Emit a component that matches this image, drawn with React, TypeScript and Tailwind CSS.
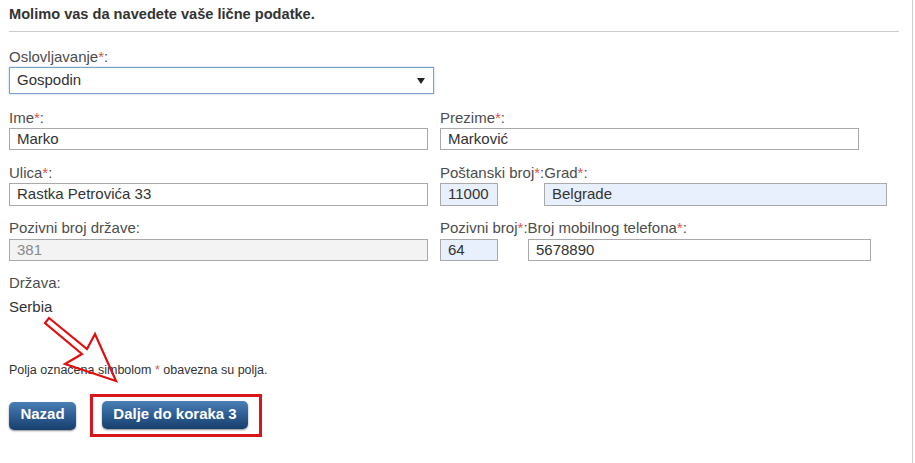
import type { ReactNode } from "react";

const Req = () => <span className="text-[#d9534f]">*</span>;

function Label({ children, className = "" }: { children: ReactNode; className?: string }) {
  return <div className={`text-[15px] leading-[18px] text-[#4d4d4d] ${className}`}>{children}</div>;
}

function Field({ value, className = "", tone = "white" }: { value: string; className?: string; tone?: "white" | "fill" | "off" }) {
  const look =
    tone === "fill" ? "bg-[#e8f0fe] text-[#333]" : tone === "off" ? "bg-[#f3f3f3] text-[#8a8a8a]" : "bg-white text-[#333]";
  return (
    <div className={`flex items-center border border-[#a9a9a9] pl-[7px] text-[15px] ${look} ${className}`}>
      {value}
    </div>
  );
}

function BlueButton({ children, className = "" }: { children: ReactNode; className?: string }) {
  return (
    <button
      className={`h-[28px] rounded-[5px] bg-gradient-to-b from-[#4b7fb5] via-[#2d5e93] to-[#173f6c] pb-[2px] text-[15px] font-bold text-white shadow-[0_1px_2px_rgba(0,0,0,0.45)] ${className}`}
    >
      {children}
    </button>
  );
}

export default function App() {
  return (
    <div className="relative min-h-[463px] w-[913px] border-r border-[#cfcfcf] bg-white pl-[9px] font-['Liberation_Sans',Arial,sans-serif]">
      <h1 className="pt-[6px] text-[14.6px] font-bold leading-[16px] text-[#333]">Molimo vas da navedete vaše lične podatke.</h1>
      <div className="mt-[9px] w-[890px] border-t border-[#cccccc]" />

      <Label className="mt-[16px]">
        Oslovljavanje<Req />:
      </Label>
      <div className="mt-[1px] flex h-[27px] w-[425px] items-center justify-between border border-[#7ea2cb] pl-[7px] pr-[8px] text-[15px] text-[#333] shadow-[0_0_2px_rgba(90,140,200,0.5)]">
        <span>Gospodin</span>
        <svg width="8" height="6" viewBox="0 0 8 6">
          <path d="M0 0h8L4 6z" fill="#222" />
        </svg>
      </div>

      {/* two-column rows */}
      <div className="grid grid-cols-[431px_1fr]">
        <div className="mt-[15px]">
          <Label>
            Ime<Req />:
          </Label>
          <Field value="Marko" className="mt-[1px] h-[22px] w-[419px]" />
        </div>
        <div className="mt-[15px]">
          <Label>
            Prezime<Req />:
          </Label>
          <Field value="Marković" className="mt-[1px] h-[22px] w-[419px]" />
        </div>

        <div className="mt-[14px]">
          <Label>
            Ulica<Req />:
          </Label>
          <Field value="Rastka Petrovića 33" className="mt-[1px] h-[23px] w-[419px]" />
        </div>
        <div className="mt-[14px]">
          <Label>
            Poštanski broj<Req />:Grad<Req />:
          </Label>
          <div className="mt-[1px] flex">
            <Field value="11000" tone="fill" className="h-[23px] w-[58px]" />
            <Field value="Belgrade" tone="fill" className="ml-[46px] h-[23px] w-[343px]" />
          </div>
        </div>

        <div className="mt-[13px]">
          <Label>Pozivni broj države:</Label>
          <Field value="381" tone="off" className="mt-[2px] h-[22px] w-[419px]" />
        </div>
        <div className="mt-[13px]">
          <Label>
            Pozivni broj<Req />:Broj mobilnog telefona<Req />:
          </Label>
          <div className="mt-[2px] flex">
            <Field value="64" tone="fill" className="h-[22px] w-[58px]" />
            <Field value="5678890" className="ml-[30px] h-[22px] w-[343px]" />
          </div>
        </div>
      </div>

      <Label className="mt-[13px]">Država:</Label>
      <Label className="mt-[6px] text-[#333]">Serbia</Label>

      <p className="mt-[47px] text-[12.5px] leading-[14px] text-[#333]">
        Polja označena simbolom <Req /> obavezna su polja.
      </p>

      <div className="mt-[17px] flex items-center">
        <BlueButton className="w-[67px]">Nazad</BlueButton>
        <div className="ml-[14px] border-[3px] border-[#d9141b] pb-[5px] pl-[9px] pr-[11px] pt-[4px]">
          <BlueButton className="w-[146px]">Dalje do koraka 3</BlueButton>
        </div>
      </div>

      {/* hollow red pointer drawn over the note */}
      <svg className="pointer-events-none absolute left-0 top-0" width="140" height="400" viewBox="0 0 140 400">
        <polygon
          points="49,318 87,349 95,334 116,381 65,364 82,354 45,323"
          fill="none"
          stroke="#e01010"
          strokeWidth="2.2"
          strokeLinejoin="miter"
        />
      </svg>
    </div>
  );
}
